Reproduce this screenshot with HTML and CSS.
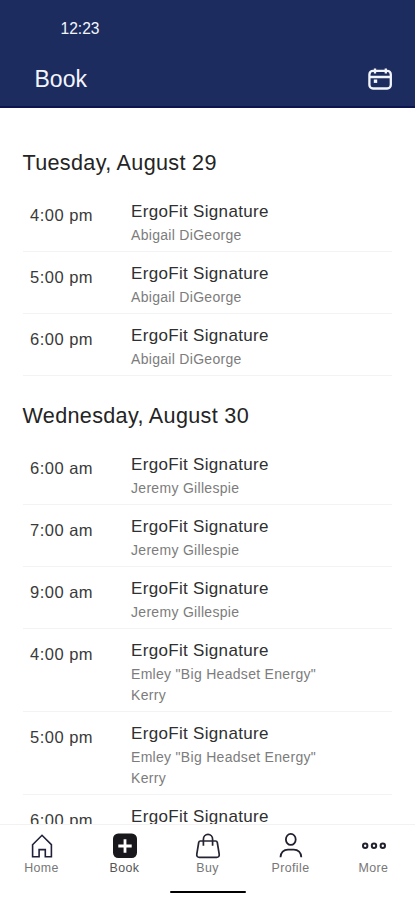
FILE: index.html
```html
<!DOCTYPE html>
<html lang="en">
<head>
<meta charset="utf-8">
<meta name="viewport" content="width=device-width, initial-scale=1">
<title>Book</title>
<link rel="stylesheet" href="styles.css">
</head>
<body>
<header class="header">
  <div class="status">12:23</div>
  <div class="titlebar">
    <h1 class="title">Book</h1>
    <svg class="calendar" width="26" height="24" viewBox="0 0 26 24" fill="none" stroke="currentColor" stroke-width="2.3">
      <rect x="2.4" y="3.8" width="21.4" height="17.7" rx="3.6"/>
      <path d="M2.4 10h21.4M8 1.600v5M18.800 1.600v5"/>
      <path d="M6.800 14.200h3.400" stroke-width="3.400"/>
    </svg>
  </div>
</header>
<main class="schedule">
  <section>
    <h2 class="day">Tuesday, August 29</h2>
    <div class="row"><time class="time">4:00 pm</time><div><div class="name">ErgoFit Signature</div><div class="coach">Abigail DiGeorge</div></div></div>
    <div class="row"><time class="time">5:00 pm</time><div><div class="name">ErgoFit Signature</div><div class="coach">Abigail DiGeorge</div></div></div>
    <div class="row"><time class="time">6:00 pm</time><div><div class="name">ErgoFit Signature</div><div class="coach">Abigail DiGeorge</div></div></div>
  </section>
  <section>
    <h2 class="day">Wednesday, August 30</h2>
    <div class="row"><time class="time">6:00 am</time><div><div class="name">ErgoFit Signature</div><div class="coach">Jeremy Gillespie</div></div></div>
    <div class="row"><time class="time">7:00 am</time><div><div class="name">ErgoFit Signature</div><div class="coach">Jeremy Gillespie</div></div></div>
    <div class="row"><time class="time">9:00 am</time><div><div class="name">ErgoFit Signature</div><div class="coach">Jeremy Gillespie</div></div></div>
    <div class="row"><time class="time">4:00 pm</time><div><div class="name">ErgoFit Signature</div><div class="coach">Emley "Big Headset Energy" Kerry</div></div></div>
    <div class="row"><time class="time">5:00 pm</time><div><div class="name">ErgoFit Signature</div><div class="coach">Emley "Big Headset Energy" Kerry</div></div></div>
    <div class="row"><time class="time">6:00 pm</time><div><div class="name">ErgoFit Signature</div></div></div>
  </section>
</main>
<footer class="footer">
  <nav class="nav">
    <a class="tab">
      <svg width="28" height="28" viewBox="0 0 28 28" fill="none" stroke="#20203a" stroke-width="1.6"><path d="M4.6 12.7 14 3.3l9.4 9.4v12h-6.1v-7.1h-6.2v7.1H4.6z"/></svg>
      <span>Home</span>
    </a>
    <a class="tab active">
      <svg width="28" height="28" viewBox="0 0 28 28"><rect x="2" y="1.6" width="24" height="24.4" rx="5.2" fill="#18181c"/><path d="M14 7.3v13.4M7.3 14h13.4" stroke="#fff" stroke-width="2.8"/></svg>
      <span>Book</span>
    </a>
    <a class="tab">
      <svg width="28" height="28" viewBox="0 0 28 28" fill="none" stroke="#242432" stroke-width="1.7"><path d="M6.4 9h15.2c1 0 1.5.5 1.7 1.500l1.900 11.700c.3 2-.7 3.200-2.600 3.200H5.400c-1.900 0-2.900-1.200-2.600-3.200l1.900-11.700C4.900 9.500 5.400 9 6.400 9zM9.400 13.800V7.200a4.600 4.900 0 0 1 9.200 0v6.600"/></svg>
      <span>Buy</span>
    </a>
    <a class="tab">
      <svg width="28" height="28" viewBox="0 0 28 28" fill="none" stroke="#20202e" stroke-width="1.8"><ellipse cx="13.8" cy="7.4" rx="4.9" ry="5.5"/><path d="M3.5 25.300c0-4.600 3.300-7.700 7.500-7.700h5.800c4.200 0 7.500 3.100 7.500 7.700"/></svg>
      <span>Profile</span>
    </a>
    <a class="tab">
      <svg width="28" height="28" viewBox="0 0 28 28" fill="none" stroke="#20202e" stroke-width="2"><circle cx="5.2" cy="13.800" r="2.200"/><circle cx="14" cy="13.800" r="2.200"/><circle cx="22.800" cy="13.800" r="2.200"/></svg>
      <span>More</span>
    </a>
  </nav>
  <div class="home-bar"></div>
</footer>
</body>
</html>
```
FILE: styles.css
```css
* {
  box-sizing: border-box;
}

body {
  margin: 0;
  height: 900px;
  display: flex;
  flex-direction: column;
  overflow: hidden;
  background: #fff;
  color: #333;
  font-family: "Liberation Sans", Arial, sans-serif;
}

.header {
  flex: none;
  height: 108px;
  background: #1d2c5f;
  border-bottom: 2px solid #0c1550;
  color: #f3f5fc;
}

.status {
  padding: 19px 0 0 60.5px;
  font-size: 15.6px;
  line-height: 20px;
}

.titlebar {
  display: flex;
  align-items: center;
  justify-content: space-between;
  margin-top: 24px;
  padding: 0 22px 0 34.5px;
  height: 32px;
}

.title {
  margin: 0;
  font-size: 23px;
  font-weight: 400;
  line-height: 32px;
}

.schedule {
  flex: 1;
  min-height: 0;
  overflow: hidden;
  padding: 15px 23px 0 22.5px;
}

.day {
  display: flex;
  align-items: center;
  height: 67px;
  margin: 0;
  padding-top: 12px;
  font-size: 21.6px;
  font-weight: 400;
  line-height: 28px;
  letter-spacing: 0.32px;
  color: #242424;
}

.row {
  display: grid;
  grid-template-columns: 101px 200px;
  padding: 11px 0 6px 7.5px;
  border-bottom: 1px solid #f3f3f3;
}

.time {
  padding-top: 3.4px;
  font-size: 16.5px;
  line-height: 22px;
  letter-spacing: 0.5px;
  color: #3a3a3a;
}

.name {
  font-size: 17px;
  line-height: 22px;
  letter-spacing: 0.32px;
  color: #303030;
}

.coach {
  padding-top: 2px;
  margin-bottom: -0.8px;
  font-size: 14px;
  line-height: 20.8px;
  letter-spacing: 0.3px;
  color: #7c7c7c;
}

.footer {
  flex: none;
  height: 76px;
  border-top: 1px solid #f2f2f2;
  background: #fff;
}

.nav {
  display: grid;
  grid-template-columns: repeat(5, 83px);
  height: 53px;
  padding-top: 7px;
}

.tab {
  display: flex;
  flex-direction: column;
  align-items: center;
  font-size: 12.4px;
  line-height: 16px;
  letter-spacing: 0.4px;
  color: #777;
}

.active {
  color: #555;
}

.home-bar {
  width: 76px;
  height: 2px;
  margin: 13px auto 0;
  border-radius: 1px;
  background: #000;
}
```
